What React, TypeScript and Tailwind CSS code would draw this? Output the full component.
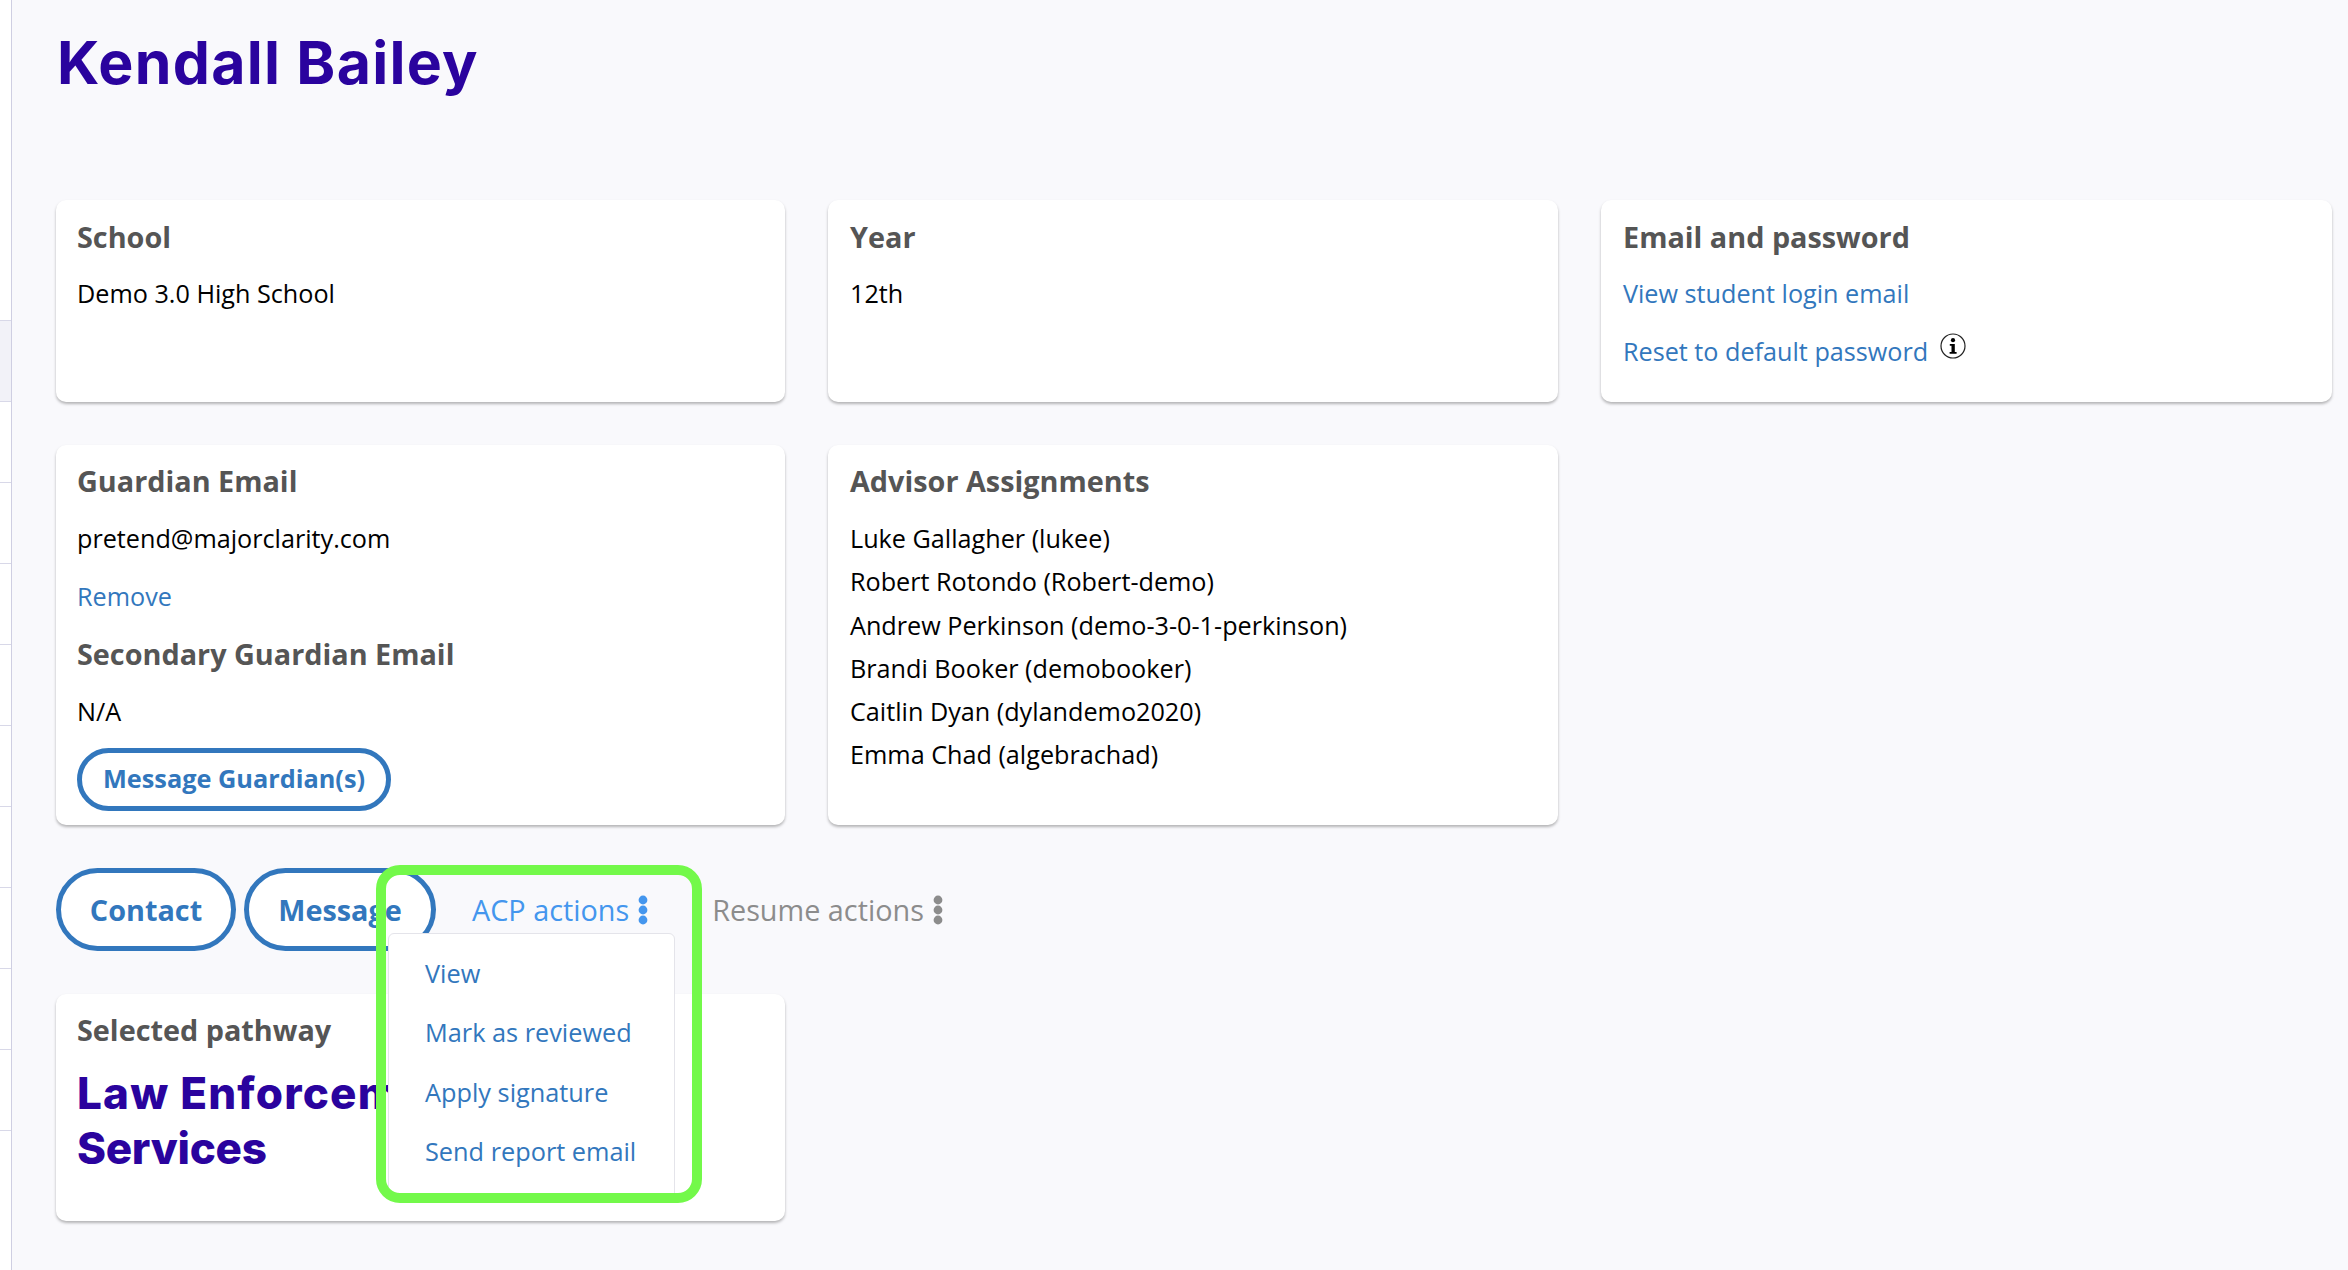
import React from "react";

const sans = "font-['Open_Sans',sans-serif]";

function Kebab({ color }: { color: string }) {
  return (
    <svg width="10" height="30" viewBox="0 0 10 30" className="ml-[9px] shrink-0">
      <circle cx="5" cy="5" r="4.4" fill={color} />
      <circle cx="5" cy="15" r="4.4" fill={color} />
      <circle cx="5" cy="25" r="4.4" fill={color} />
    </svg>
  );
}

function Card({ children, className = "" }: { children: React.ReactNode; className?: string }) {
  return (
    <div className={`rounded-[10px] bg-white pr-[22px] shadow-[0_2px_3px_rgba(0,0,0,0.28)] ${className}`}>
      {children}
    </div>
  );
}

function H({ children }: { children: React.ReactNode }) {
  return <div className="text-[28.8px] leading-[44px] font-bold text-[#555555]">{children}</div>;
}

function P({ children, className = "" }: { children: React.ReactNode; className?: string }) {
  return <div className={`text-[25.2px] leading-[43.3px] text-black ${className}`}>{children}</div>;
}

function L({ children, className = "" }: { children: React.ReactNode; className?: string }) {
  return <div className={`text-[25.2px] leading-[43.3px] text-[#3277bd] ${className}`}>{children}</div>;
}

function Pill({ children, className = "" }: { children: React.ReactNode; className?: string }) {
  return (
    <div className={`flex items-center justify-center rounded-full border-[5px] border-[#3277bd] bg-white font-bold text-[#3277bd] ${className}`}>
      {children}
    </div>
  );
}

export default function App() {
  const rows = [0, 1, 2, 3, 4, 5, 6, 7, 8, 9, 10];
  return (
    <div className={`flex h-[1270px] w-[2348px] overflow-hidden bg-[#f9f9fc] ${sans}`}>
      <div className="flex w-[12px] shrink-0 flex-col border-r border-[#cfcfe2] bg-white pt-[320px]">
        {rows.map((r) => (
          <div key={r} className={`h-[81px] shrink-0 border-t border-[#d8d8e8] ${r === 0 ? "bg-[#f2f2f8]" : ""}`} />
        ))}
      </div>
      <div className="flex min-w-0 flex-1 flex-col pl-[44px] pr-[16px]">
        <h1 className="h-[200px] pt-[24px] pl-[1px] font-['Inter',sans-serif] text-[59px] leading-[78px] font-bold tracking-[1.25px] text-[#2a039e]">
          Kendall Bailey
        </h1>
        <div className="grid grid-cols-[729px_730px_731px] gap-x-[43px] gap-y-[43px]">
          <Card className="h-[202px] pt-[15px] pl-[21px]">
            <H>School</H>
            <P className="mt-[13px]">Demo 3.0 High School</P>
          </Card>
          <Card className="h-[202px] pt-[15px] pl-[22px]">
            <H>Year</H>
            <P className="mt-[13px]">12th</P>
          </Card>
          <Card className="h-[202px] pt-[15px] pl-[22px]">
            <H>Email and password</H>
            <L className="mt-[13px]">View student login email</L>
            <div className="mt-[15px] flex items-start">
              <L>Reset to default password</L>
              <svg width="26" height="26" viewBox="0 0 26 26" className="mt-[3px] ml-[12px] shrink-0">
                <circle cx="13" cy="13" r="12" fill="white" stroke="#222" strokeWidth="1.2" />
                <circle cx="13" cy="7.2" r="2.1" fill="#000" />
                <path d="M9.8 11h5v8h1.8v1.8H9.6V19h1.9v-6.2H9.8z" fill="#000" />
              </svg>
            </div>
          </Card>
          <Card className="h-[380px] pt-[14px] pl-[21px]">
            <H>Guardian Email</H>
            <P className="mt-[14px]">pretend@majorclarity.com</P>
            <L className="mt-[15px]">Remove</L>
            <div className="mt-[13px]"><H>Secondary Guardian Email</H></div>
            <P className="mt-[14px]">N/A</P>
            <Pill className="mt-[15px] h-[63px] w-[314px] text-[25.3px]">Message Guardian(s)</Pill>
          </Card>
          <Card className="h-[380px] pt-[14px] pl-[22px]">
            <H>Advisor Assignments</H>
            <div className="mt-[14px]">
              <P>Luke Gallagher (lukee)</P>
              <P>Robert Rotondo (Robert-demo)</P>
              <P>Andrew Perkinson (demo-3-0-1-perkinson)</P>
              <P>Brandi Booker (demobooker)</P>
              <P>Caitlin Dyan (dylandemo2020)</P>
              <P>Emma Chad (algebrachad)</P>
            </div>
          </Card>
        </div>
        <div className="relative mt-[43px] flex h-[83px] items-center">
          <Pill className="h-[83px] w-[180px] text-[28.8px]">Contact</Pill>
          <Pill className="ml-[8px] h-[83px] w-[192px] text-[28.8px]">Message</Pill>
          <div className="relative ml-[36px] flex items-center text-[28.8px] text-[#4496ee]">
            ACP actions
            <Kebab color="#4496ee" />
            <div className="absolute top-[45px] left-[-84px] z-10 h-[267px] w-[287px] rounded-[6px] border border-[#e4e4ea] bg-white pt-[10px] pl-[36px]">
              {["View", "Mark as reviewed", "Apply signature", "Send report email"].map((t) => (
                <div key={t} className="h-[59.5px] text-[25.3px] leading-[59.5px] whitespace-nowrap text-[#3277bd]">{t}</div>
              ))}
            </div>
          </div>
          <div className="ml-[64px] flex items-center text-[28.8px] text-[#8c8c8c]">
            Resume actions
            <Kebab color="#8c8c8c" />
          </div>
          <div className="pointer-events-none absolute top-[-3px] left-[320px] z-20 h-[338px] w-[326px] rounded-[24px] border-[10px] border-[#73f94a]" />
        </div>
        <Card className="mt-[43px] h-[227px] w-[729px] pt-[14px] pl-[21px]">
          <div className="text-[28.8px] leading-[44px] font-bold text-[#555555]">Selected pathway</div>
          <div className="mt-[14px] font-['Inter',sans-serif] text-[44px] leading-[55px] font-extrabold text-[#2a039e]">
            <div className="tracking-[1.2px]">Law Enforcement</div>
            <div className="tracking-[-0.3px]">Services</div>
          </div>
        </Card>
      </div>
    </div>
  );
}
